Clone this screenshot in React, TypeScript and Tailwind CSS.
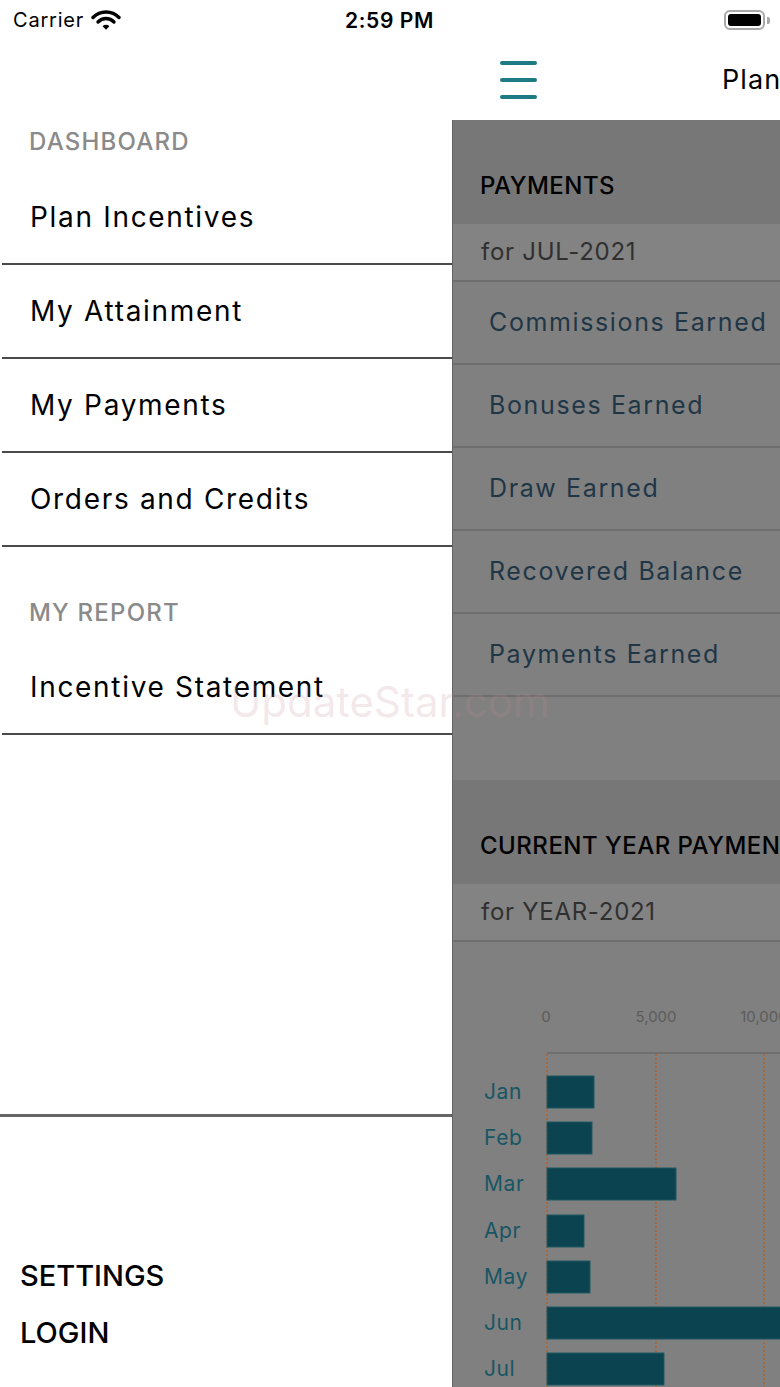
import React from 'react';

const font = { fontFamily: 'Inter, "Noto Sans", sans-serif' };

const menuTop = ['Plan Incentives', 'My Attainment', 'My Payments', 'Orders and Credits'];
const payRows = ['Commissions Earned', 'Bonuses Earned', 'Draw Earned', 'Recovered Balance', 'Payments Earned'];

const months = [
  { m: 'Jan', w: 47 },
  { m: 'Feb', w: 45 },
  { m: 'Mar', w: 129 },
  { m: 'Apr', w: 37 },
  { m: 'May', w: 43 },
  { m: 'Jun', w: 300 },
  { m: 'Jul', w: 117 },
];

function StatusBar() {
  return (
    <div className="h-[40px] bg-white flex items-center justify-between pl-[13px] pr-[10px] relative">
      <div className="flex items-center gap-[7px]">
        <span className="text-[20px] tracking-[0.04em] text-black leading-none">Carrier</span>
        <svg width="30" height="22" viewBox="0 0 30 22">
          <path d="M2 8.5 A18 18 0 0 1 28 8.5" fill="none" stroke="#000" strokeWidth="3.4" strokeLinecap="round" />
          <path d="M7 13 A11 11 0 0 1 23 13" fill="none" stroke="#000" strokeWidth="3.4" strokeLinecap="round" />
          <path d="M11.6 17.2 A4.8 4.8 0 0 1 18.4 17.2 L15 20.8 Z" fill="#000" />
        </svg>
      </div>
      <span className="absolute left-[345px] text-[21px] tracking-[0.03em] font-semibold text-black leading-none">2:59 PM</span>
      <div className="flex items-center gap-[2px]">
        <div className="w-[41px] h-[20px] rounded-[6px] border-[2px] border-[#a8a8a8] p-[2px]">
          <div className="w-full h-full rounded-[3px] bg-black" />
        </div>
        <div className="w-[3px] h-[7px] rounded-r-[2px] bg-[#a8a8a8]" />
      </div>
    </div>
  );
}

function Drawer() {
  return (
    <div className="w-[452px] shrink-0 bg-white flex flex-col h-full">
      <div className="pt-[88px]" />
      <div className="pl-[29px] h-[28px] leading-[28px] text-[24px] tracking-[0.05em] font-medium text-[#8a8a8a] mb-[15px]">DASHBOARD</div>
      {menuTop.map((t) => (
        <div key={t} className="h-[94px] ml-[2px] border-b-2 border-[#4a4a4a] flex items-center pl-[28px] text-[28px] tracking-[0.06em] text-black">
          {t}
        </div>
      ))}
      <div className="pl-[29px] mt-[52px] h-[28px] leading-[28px] text-[24px] tracking-[0.05em] font-medium text-[#8a8a8a] mb-[14px]">MY REPORT</div>
      <div className="h-[94px] ml-[2px] border-b-2 border-[#4a4a4a] flex items-center pl-[28px] text-[28px] tracking-[0.06em] text-black">
        Incentive Statement
      </div>
      <div className="mt-auto h-[273px] border-t-[3px] border-[#666666] pl-[20px]">
        <div className="pt-[142px] h-[176px] text-[29px] font-medium text-black leading-[34px]">SETTINGS</div>
        <div className="mt-[23px] text-[29px] font-medium text-black leading-[34px]">LOGIN</div>
      </div>
    </div>
  );
}

function Chart() {
  const tops = [134, 180, 226, 273, 319, 365, 411];
  return (
    <svg width="328" height="446" viewBox="0 0 328 446" style={font}>
      <text x="93" y="80" textAnchor="middle" fontSize="15" fill="#5c5c5c">0</text>
      <text x="203" y="80" textAnchor="middle" fontSize="15" fill="#5c5c5c">5,000</text>
      <text x="311" y="80" textAnchor="middle" fontSize="15" fill="#5c5c5c">10,000</text>
      <line x1="94" y1="111" x2="328" y2="111" stroke="#6a6a6a" strokeWidth="1.5" />
      {[94, 203, 311].map((x) => (
        <line key={x} x1={x} y1="112" x2={x} y2="446" stroke="#b0622f" strokeWidth="1.6" strokeDasharray="2 2" />
      ))}
      {months.map((d, i) => (
        <g key={d.m}>
          <rect x="94" y={tops[i]} width={d.w} height="32" fill="#0b4450" stroke="#1e5863" strokeWidth="1" />
          <text x="31" y={tops[i] + 23} fontSize="21" letterSpacing="0.6" fill="#185664">{d.m}</text>
        </g>
      ))}
    </svg>
  );
}

function Main() {
  return (
    <div className="flex-1 flex flex-col overflow-hidden h-full">
      <div className="h-[80px] bg-white flex items-center relative shrink-0">
        <div className="ml-[48px] w-[37px] flex flex-col gap-[13px]">
          <div className="h-[4px] rounded-full bg-[#1e7a85]" />
          <div className="h-[4px] rounded-full bg-[#1e7a85]" />
          <div className="h-[4px] rounded-full bg-[#1e7a85]" />
        </div>
        <span className="absolute left-[270px] text-[27px] tracking-[0.04em] text-black whitespace-nowrap">Plan Incentives</span>
      </div>
      <div className="flex-1 bg-[#808080] border-l border-[#646464] w-[560px]">
        <div className="h-[104px] bg-[#777777] pl-[27px] pt-[52px] leading-[28px] text-[24px] tracking-[0.02em] font-medium text-black">PAYMENTS</div>
        <div className="h-[58px] bg-[#838383] border-b-2 border-[#6e6e6e] pl-[28px] flex items-center text-[24px] tracking-[0.03em] text-[#303030]">for JUL-2021</div>
        {payRows.map((r) => (
          <div key={r} className="h-[83px] border-b-2 border-[#6e6e6e] flex items-center pl-[36px] text-[25px] tracking-[0.065em] text-[#1f3646]">
            {r}
          </div>
        ))}
        <div className="h-[83px]" />
        <div className="h-[104px] bg-[#777777] pl-[27px] pt-[52px] leading-[28px] text-[24px] tracking-[0.02em] font-medium text-black whitespace-nowrap">CURRENT YEAR PAYMENTS</div>
        <div className="h-[58px] bg-[#838383] border-b-2 border-[#6e6e6e] pl-[28px] flex items-center text-[24px] tracking-[0.03em] text-[#303030]">for YEAR-2021</div>
        <Chart />
      </div>
    </div>
  );
}

export default function App() {
  return (
    <div className="w-[780px] h-[1387px] overflow-hidden bg-white relative flex flex-col" style={font}>
      <StatusBar />
      <div className="flex flex-1 min-h-0">
        <Drawer />
        <Main />
      </div>
      <div className="absolute left-[230px] top-[670px] text-[42px] text-[#c08892]/20 pointer-events-none whitespace-nowrap">
        UpdateStar.com
      </div>
    </div>
  );
}
